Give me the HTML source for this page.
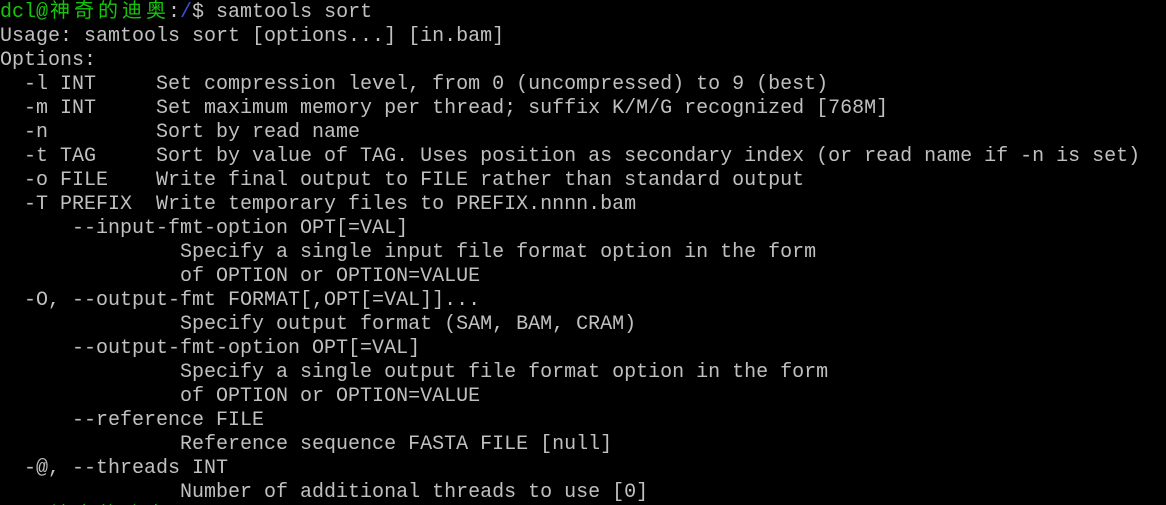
<!DOCTYPE html>
<html><head><meta charset="utf-8"><style>
html,body{margin:0;padding:0;background:#000;width:1166px;height:505px;overflow:hidden}
pre{margin:1px 0 0 0;padding:0;font-family:"Liberation Mono","Noto Sans CJK SC",monospace;font-size:20px;line-height:24px;color:#c0c0c0;white-space:pre}
.g{color:#16c60c}.b{color:#3b4fd8}
.c{display:inline-block;width:24px;text-align:center;font-family:"Noto Sans CJK SC",sans-serif;font-size:20px;line-height:24px;vertical-align:top;position:relative;top:-4px}
</style></head><body><pre><span class="g">dcl@<span class="c">神</span><span class="c">奇</span><span class="c">的</span><span class="c">迪</span><span class="c">奥</span></span>:<span class="b">/</span>$ samtools sort
Usage: samtools sort [options...] [in.bam]
Options:
  -l INT     Set compression level, from 0 (uncompressed) to 9 (best)
  -m INT     Set maximum memory per thread; suffix K/M/G recognized [768M]
  -n         Sort by read name
  -t TAG     Sort by value of TAG. Uses position as secondary index (or read name if -n is set)
  -o FILE    Write final output to FILE rather than standard output
  -T PREFIX  Write temporary files to PREFIX.nnnn.bam
      --input-fmt-option OPT[=VAL]
               Specify a single input file format option in the form
               of OPTION or OPTION=VALUE
  -O, --output-fmt FORMAT[,OPT[=VAL]]...
               Specify output format (SAM, BAM, CRAM)
      --output-fmt-option OPT[=VAL]
               Specify a single output file format option in the form
               of OPTION or OPTION=VALUE
      --reference FILE
               Reference sequence FASTA FILE [null]
  -@, --threads INT
               Number of additional threads to use [0]
    <span class="g"><span class="c">神</span><span class="c">奇</span><span class="c">的</span><span class="c">迪</span><span class="c">奥</span></span></pre></body></html>
